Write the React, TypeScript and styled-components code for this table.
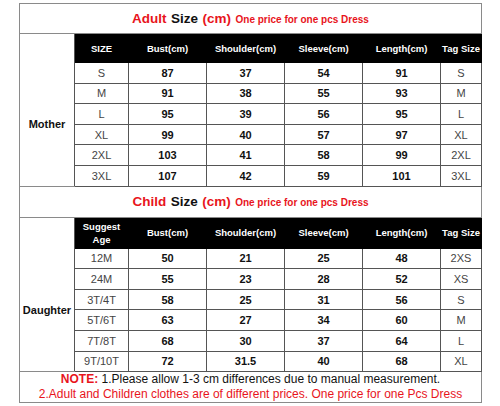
import React from 'react'
import styled, { createGlobalStyle } from 'styled-components'

const GlobalStyle = createGlobalStyle`
  html, body {
    margin: 0;
    padding: 0;
    background: #fff;
  }
  body {
    font-family: "Liberation Sans", Arial, sans-serif;
  }
`

const Page = styled.div`
  width: 500px;
  height: 406px;
  padding: 3px 0 0 19px;
  box-sizing: border-box;
`

const Table = styled.table`
  width: 462px;
  border-collapse: collapse;
  table-layout: fixed;
  border: 1px solid #8a8a8a;
`

const TitleCell = styled.td<{ $h: number }>`
  height: ${({ $h }) => $h}px;
  padding: 0;
  text-align: center;
  border: 1px solid #8a8a8a;
  font-weight: bold;
  white-space: nowrap;
  line-height: 14px;
`

const Big = styled.span<{ $red?: boolean }>`
  font-size: 13.5px;
  color: ${({ $red }) => ($red ? '#e8141c' : '#111')};
`

const Small = styled.span`
  font-size: 10px;
  color: #e8141c;
`

const HeadCell = styled.th<{ $h: number }>`
  height: ${({ $h }) => $h}px;
  padding: 0;
  background: #000;
  color: #fff;
  font-size: 9.5px;
  font-weight: bold;
  line-height: 13px;
  text-align: center;
  border: 1px solid #000;
  white-space: nowrap;
`

const BlankHead = styled.td`
  padding: 0;
  background: #fff;
  border-left: 1px solid #8a8a8a;
  border-right: 1px solid #555;
`

const GroupCell = styled.td`
  padding: 0;
  text-align: center;
  vertical-align: middle;
  font-size: 11px;
  font-weight: bold;
  color: #111;
  border-right: 1px solid #555;
  border-bottom: 1px solid #8a8a8a;
`

const Cell = styled.td<{ $bold?: boolean }>`
  height: 19.6px;
  padding: 0;
  text-align: center;
  font-size: 11px;
  line-height: 12px;
  font-weight: ${({ $bold }) => ($bold ? 'bold' : 'normal')};
  color: ${({ $bold }) => ($bold ? '#111' : '#444')};
  border: 1px solid #555;
`

const NoteCell = styled.td`
  height: 30px;
  padding: 0;
  text-align: center;
  font-size: 12px;
  line-height: 15px;
  border: 1px solid #8a8a8a;
  white-space: nowrap;
`

const Red = styled.span<{ $bold?: boolean }>`
  color: #e8141c;
  font-weight: ${({ $bold }) => ($bold ? 'bold' : 'normal')};
`

const Line = styled.div<{ $red?: boolean }>`
  color: ${({ $red }) => ($red ? '#e8141c' : '#111')};
`

const cols = [55, 54, 78, 78, 78, 78, 41]

const adultHead = ['SIZE', 'Bust(cm)', 'Shoulder(cm)', 'Sleeve(cm)', 'Length(cm)', 'Tag Size']
const adultRows = [
  ['S', '87', '37', '54', '91', 'S'],
  ['M', '91', '38', '55', '93', 'M'],
  ['L', '95', '39', '56', '95', 'L'],
  ['XL', '99', '40', '57', '97', 'XL'],
  ['2XL', '103', '41', '58', '99', '2XL'],
  ['3XL', '107', '42', '59', '101', '3XL'],
]

const childRows = [
  ['12M', '50', '21', '25', '48', '2XS'],
  ['24M', '55', '23', '28', '52', 'XS'],
  ['3T/4T', '58', '25', '31', '56', 'S'],
  ['5T/6T', '63', '27', '34', '60', 'M'],
  ['7T/8T', '68', '30', '37', '64', 'L'],
  ['9T/10T', '72', '31.5', '40', '68', 'XL'],
]

const Title = ({ who, h }: { who: string; h: number }) => (
  <tr>
    <TitleCell colSpan={7} $h={h}>
      <Big $red>{who}</Big> <Big>Size</Big> <Big $red>(cm)</Big>{' '}
      <Small>One price for one pcs Dress</Small>
    </TitleCell>
  </tr>
)

const Rows = ({ group, rows }: { group: string; rows: string[][] }) => (
  <>
    {rows.map((r, i) => (
      <tr key={r[0]}>
        {i === 0 && <GroupCell rowSpan={rows.length}>{group}</GroupCell>}
        {r.map((v, j) => (
          <Cell key={j} $bold={j > 0 && j < 5}>
            {v}
          </Cell>
        ))}
      </tr>
    ))}
  </>
)

export default function App() {
  return (
    <>
      <GlobalStyle />
      <Page>
        <Table>
          <colgroup>
            {cols.map((w, i) => (
              <col key={i} style={{ width: w }} />
            ))}
          </colgroup>
          <tbody>
            <Title who="Adult" h={29} />
            <tr>
              <BlankHead />
              {adultHead.map((h) => (
                <HeadCell key={h} $h={28}>
                  {h}
                </HeadCell>
              ))}
            </tr>
            <Rows group="Mother" rows={adultRows} />
            <Title who="Child" h={30} />
            <tr>
              <BlankHead />
              <HeadCell $h={30}>
                Suggest
                <br />
                Age
              </HeadCell>
              {adultHead.slice(1).map((h) => (
                <HeadCell key={h} $h={30}>
                  {h}
                </HeadCell>
              ))}
            </tr>
            <Rows group="Daughter" rows={childRows} />
            <tr>
              <NoteCell colSpan={7}>
                <Line>
                  <Red $bold>NOTE:</Red> 1.Please allow 1-3 cm differences due to manual measurement.
                </Line>
                <Line $red>2.Adult and Children clothes are of different prices. One price for one Pcs Dress</Line>
              </NoteCell>
            </tr>
          </tbody>
        </Table>
      </Page>
    </>
  )
}
